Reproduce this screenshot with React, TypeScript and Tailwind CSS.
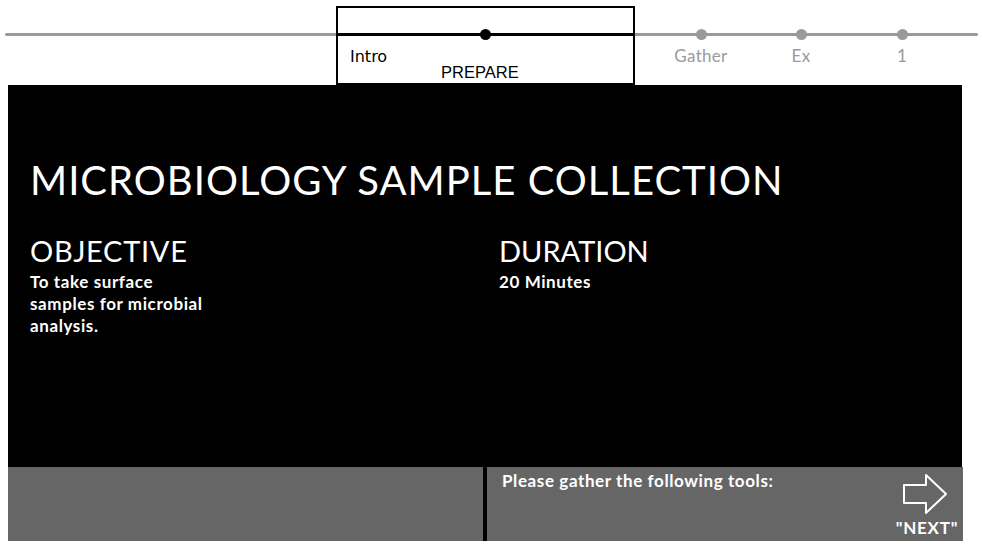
import React from "react";

const sketch = { fontFamily: '"Lato", "Noto Sans", sans-serif' };
const intro = { fontFamily: '"DejaVu Sans", "Liberation Sans", sans-serif' };
const arial = { fontFamily: '"Liberation Sans", Arial, sans-serif' };

function Step({ label, className }: { label: string; className: string }) {
  return (
    <div className={`flex flex-col items-center w-[100px] ${className}`}>
      <div className="mt-[29px] h-[11px] w-[11px] rounded-full bg-[#9a9a9a] relative z-10" />
      <div className="mt-[6px] text-[17px] leading-[20px] tracking-[0.3px] text-[#9a9a9a]" style={sketch}>
        {label}
      </div>
    </div>
  );
}

export default function App() {
  return (
    <div className="w-[983px] h-[550px] bg-white overflow-hidden">
      {/* timeline header */}
      <div className="relative h-[85px] flex">
        <div className="absolute left-[5px] right-[5px] top-[33px] h-[3px] bg-[#9a9a9a] rounded-full" />
        <div className="ml-[336px] mt-[6px] w-[299px] h-[79px] border-2 border-black bg-white relative z-10">
          <div className="absolute left-0 right-0 top-[25px] h-[3px] bg-black" />
          <div className="absolute left-[142px] top-[21px] h-[11px] w-[11px] rounded-full bg-black" />
          <div className="pt-[39px] pl-[12px] text-[16px] leading-[19px] text-black" style={intro}>
            Intro
          </div>
          <div className="pl-[103px] text-[16.5px] leading-[18px] -mt-[3px] text-black" style={arial}>
            PREPARE
          </div>
        </div>
        <Step label="Gather" className="ml-[16px]" />
        <Step label="Ex" />
        <Step label="1" className="ml-[1px]" />
      </div>

      {/* main panel */}
      <div className="ml-[8px] w-[954px] h-[382px] bg-black text-white pl-[22px] pt-[71px]" style={sketch}>
        <h1 className="text-[40px] leading-[48px] tracking-[1px]">MICROBIOLOGY SAMPLE COLLECTION</h1>
        <div className="mt-[30px] grid grid-cols-[469px_1fr]">
          <div>
            <h2 className="text-[29px] leading-[34px] tracking-[0.7px]">OBJECTIVE</h2>
            <p className="mt-[3px] text-[17px] leading-[22px] font-bold tracking-[0.6px]">
              To take surface
              <br />
              samples for microbial
              <br />
              analysis.
            </p>
          </div>
          <div>
            <h2 className="text-[29px] leading-[34px] tracking-[0px]">DURATION</h2>
            <p className="mt-[3px] text-[17px] leading-[22px] font-bold tracking-[0.6px]">20 Minutes</p>
          </div>
        </div>
      </div>

      {/* bottom bar */}
      <div className="ml-[8px] w-[955px] h-[74px] flex" style={sketch}>
        <div className="w-[475px] bg-[#666666]" />
        <div className="w-[4px] bg-black" />
        <div className="flex-1 bg-[#666666] flex text-white">
          <div className="flex-1 pl-[15px] pt-[3px] text-[17px] leading-[22px] font-bold tracking-[0.6px]">
            Please gather the following tools:
          </div>
          <div className="w-[76px] flex flex-col items-center pt-[6px]">
            <svg width="46" height="42" viewBox="0 0 46 42" fill="none">
              <path
                d="M2 12 L24 12 L24 2 L44 21 L24 40 L24 30 L2 30 Z"
                stroke="white"
                strokeWidth="2"
                strokeLinejoin="round"
              />
            </svg>
            <div className="ml-[4px] text-[17px] leading-[20px] font-bold mt-[3px] tracking-[0.8px]">"NEXT"</div>
          </div>
        </div>
      </div>
    </div>
  );
}
